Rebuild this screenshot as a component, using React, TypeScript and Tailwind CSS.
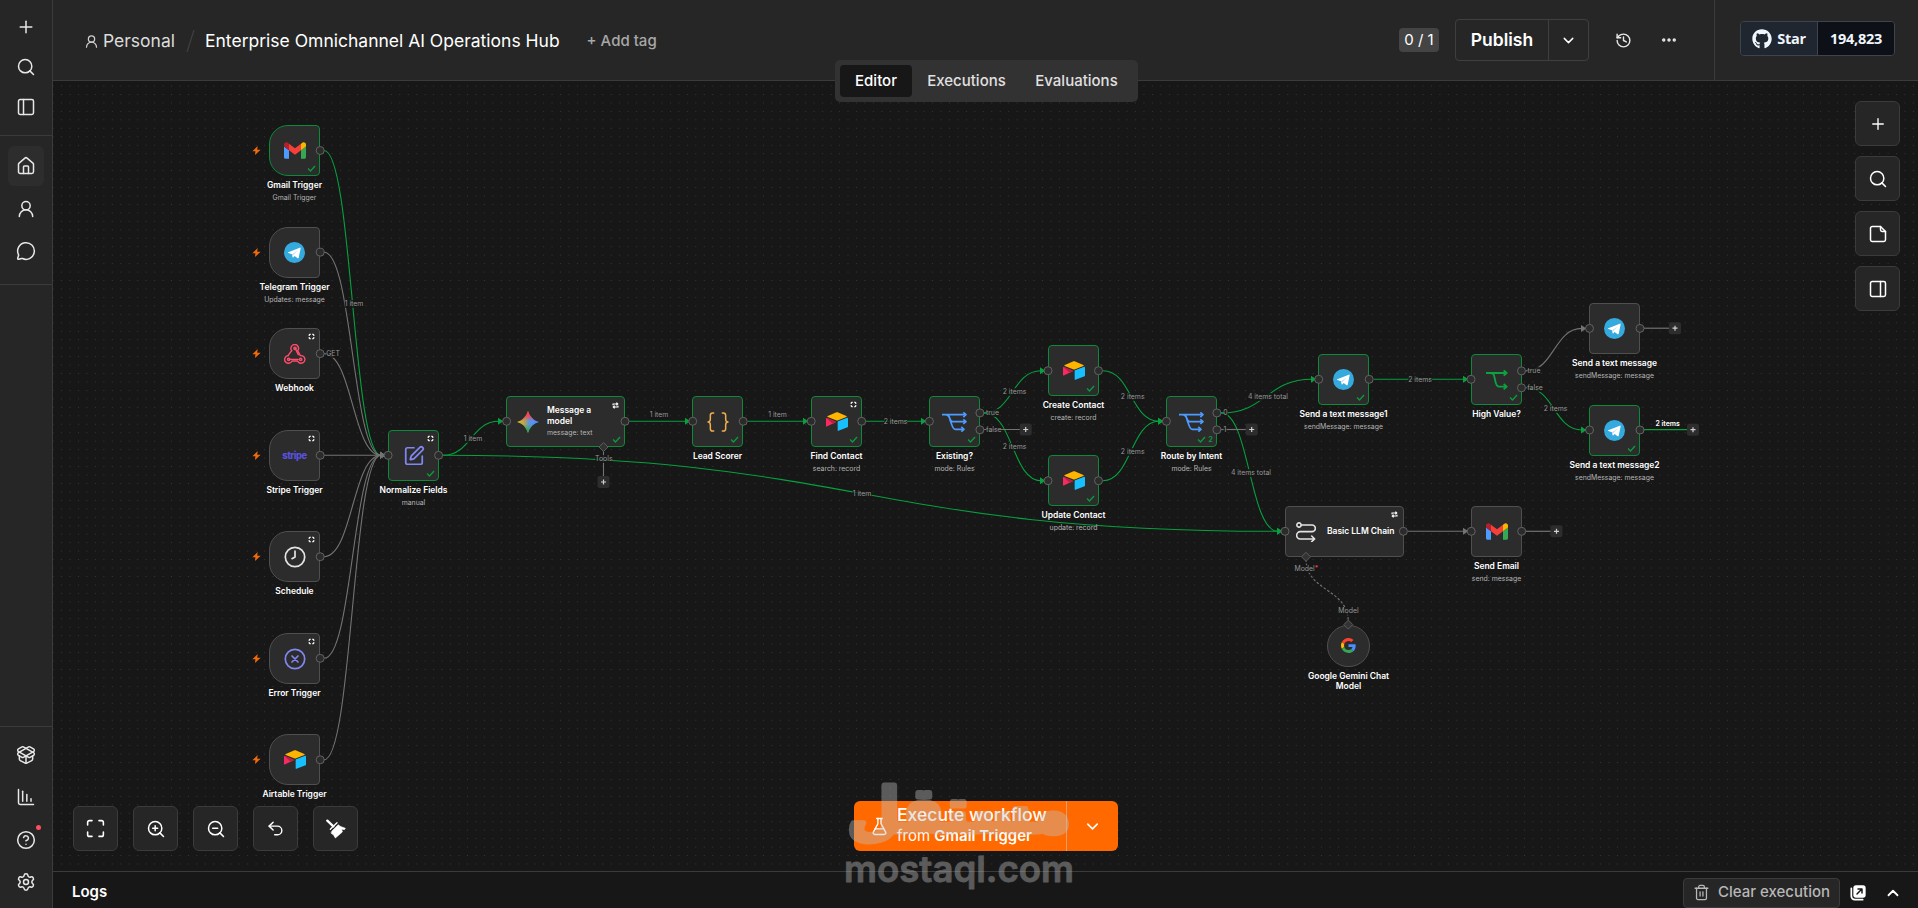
import React from 'react';
import {
  ChartColumnDecreasing,
  ChevronDown,
  ChevronUp,
  CircleHelp,
  Ellipsis,
  FlaskConical,
  History,
  House,
  Maximize,
  MessageCircle,
  PackageOpen,
  PanelLeft,
  PanelRight,
  Plus,
  Search,
  Settings,
  SquarePen,
  Trash2,
  Undo2,
  UserRound,
  ZoomIn,
  ZoomOut,
} from 'lucide-react';
import { FaGithub } from 'react-icons/fa';

/* ---------- brand / node icons ---------- */

const GmailIcon = () => (
  <svg width="22" height="17" viewBox="52 42 88 66">
    <path fill="#4c9bff" d="M58 108h14V74L52 59v43c0 3.32 2.69 6 6 6" />
    <path fill="#34a853" d="M120 108h14c3.32 0 6-2.69 6-6V59l-20 15" />
    <path fill="#fbb304" d="M120 48v26l20-15v-8c0-7.42-8.47-11.65-14.4-7.2" />
    <path fill="#f5403a" d="M72 74V48l24 18 24-18v26L96 92" />
    <path fill="#b3202a" d="M52 51v8l20 15V48l-5.600-4.200c-5.940-4.450-14.400-.22-14.400 7.200" />
  </svg>
);

const TelegramIcon = () => (
  <svg width="21" height="21" viewBox="0 0 24 24">
    <circle cx="12" cy="12" r="12" fill="#34aadf" />
    <path fill="#fff" d="M4.900 11.700 18 6.500c.8-.3 1.200.1 1 1l-2.200 10.400c-.2.8-.7 1-1.300.6l-3.300-2.500-1.700 1.600c-.3.3-.5.3-.6-.2l-.9-3.500-3.900-1.200c-.8-.3-.8-.7-.2-1z" />
    <path fill="#c8daea" d="m9.300 14 .6 3.500.5-2.500 5.500-5.500z" />
  </svg>
);

const AirtableIcon = () => (
  <svg width="22" height="19" viewBox="0 0 200 170">
    <path fill="#ffb400" d="M90 3 16 34c-5 2-5 8 0 10l75 29c6 3 13 3 20 0l74-29c5-2 5-8 0-10L111 3c-7-3-14-3-21 0" />
    <path fill="#18bfff" d="M106 89v76c0 4 3 6 7 5l83-33c2-1 4-3 4-5V56c0-4-4-6-7-5l-83 32c-2 1-4 3-4 6" />
    <path fill="#f82b60" d="m86 93-25 12-2 1-52 25c-3 2-7-1-7-4V58l2-4c2-2 4-2 7-1l76 31c4 1 4 7 1 9" />
    <path fill="#ba1e45" d="m86 93-25 12L2 54c2-2 4-2 7-1l76 31c4 1 4 7 1 9" />
  </svg>
);

const WebhookIcon = () => (
  <svg width="22" height="20" viewBox="0 0 66 60" fill="none" strokeLinecap="round" strokeLinejoin="round">
    <g stroke="#ff4d6d" strokeWidth="4.200">
      <path d="M23 20a11.500 11.500 0 1 1 20-3l-2 3 8 15a11.500 11.500 0 1 1-2 22 11.500 11.500 0 0 1-6-6H24a11.500 11.500 0 1 1-12-16" />
      <path d="M12 35 23 20M33 12l10 20M16 46h27" />
      <circle cx="33" cy="13" r="3.500" />
      <circle cx="14" cy="46" r="3.500" />
      <circle cx="50" cy="46" r="3.500" />
    </g>
  </svg>
);

const StripeIcon = () => (
  <span className="font-['Inter',sans-serif] text-[9.500px] leading-none font-extrabold tracking-[-0.500px] text-[#5851db]">stripe</span>
);

const ClockIcon = () => (
  <svg width="22" height="22" viewBox="0 0 22 22" fill="none" stroke="#e3e3e3" strokeWidth="1.700" strokeLinecap="round">
    <circle cx="11" cy="11" r="9.700" />
    <path d="M11 5.200V11l-3 1.700" />
  </svg>
);

const ErrorIcon = () => (
  <svg width="22" height="22" viewBox="0 0 22 22" fill="none" stroke="#8087f0" strokeWidth="1.700" strokeLinecap="round">
    <circle cx="11" cy="11" r="9.700" />
    <path d="m8 8 6 6M14 8l-6 6" />
  </svg>
);

const BracesIcon = () => (
  <svg width="22" height="20" viewBox="0 0 66 60" fill="none" stroke="#f0ad4e" strokeWidth="4.500" strokeLinecap="round" strokeLinejoin="round">
    <path d="M20 3h-3c-5 0-7 3-7 7v11c0 5-3 9-7 9 4 0 7 4 7 9v11c0 4 2 7 7 7h3M46 3h3c5 0 7 3 7 7v11c0 5 3 9 7 9-4 0-7 4-7 9v11c0 4-2 7-7 7h-3" />
  </svg>
);

const SwitchIcon = () => (
  <svg width="25.300" height="20" viewBox="0 0 76 60" fill="none" stroke="#4c9bff" strokeWidth="5" strokeLinejoin="round">
    <path d="M0 8h72M8 8c16 0 14 12 18 21s6 23 14 23h24M18 8c6 4 5 21 14 21h40" />
    <path d="m64 1 8 7-8 7M64 22l8 7-8 7M58 45l8 7-8 7" />
  </svg>
);

const BranchIcon = () => (
  <svg width="22" height="20" viewBox="0 0 66 60" fill="none" stroke="#0ba33f" strokeWidth="5.500" strokeLinejoin="round">
    <path d="M0 9h62M12 9c13 0 12 8 15 20 2 12 4 21 12 21h22" />
    <path d="m53 1 9 8-9 8M53 42l9 8-9 8" />
  </svg>
);

const GeminiIcon = () => (
  <svg width="22" height="22" viewBox="0 0 24 24">
    <defs>
      <linearGradient id="gem-h" x1="0" x2="1" y1="0.500" y2="0.500">
        <stop offset="0" stopColor="#fbbc04" />
        <stop offset="0.380" stopColor="#a7a06a" />
        <stop offset="0.550" stopColor="#5b94e8" />
        <stop offset="1" stopColor="#4c8dff" />
      </linearGradient>
      <linearGradient id="gem-t" x1="0.500" x2="0.500" y1="0" y2="1">
        <stop offset="0" stopColor="#f94543" />
        <stop offset="0.200" stopColor="#f94543" />
        <stop offset="0.450" stopColor="#f94543" stopOpacity="0" />
        <stop offset="0.600" stopColor="#34a853" stopOpacity="0" />
        <stop offset="0.850" stopColor="#34a853" />
      </linearGradient>
    </defs>
    <path fill="url(#gem-h)" d="M12 0c1.500 5.500 6 10.500 12 12-6 1.500-10.500 6.500-12 12-1.500-5.500-6-10.500-12-12C6 10.500 10.500 5.500 12 0" />
    <path fill="url(#gem-t)" d="M12 0c1.500 5.500 6 10.500 12 12-6 1.500-10.500 6.500-12 12-1.500-5.500-6-10.500-12-12C6 10.500 10.500 5.500 12 0" />
  </svg>
);

const ChainIcon = () => (
  <svg width="20" height="20" viewBox="0 0 60 60" fill="none" stroke="#e3e3e3" strokeWidth="4.800" strokeLinecap="round" strokeLinejoin="round">
    <circle cx="9" cy="9" r="6.500" />
    <path d="M16 9h32a10 10 0 0 1 0 20H13a11 11 0 0 0 0 22h43M47 42l9 9-9 8" />
  </svg>
);

const GoogleIcon = () => (
  <svg width="15" height="15" viewBox="0 0 48 48">
    <path fill="#ff4131" d="M24 9.500c3.540 0 6.710 1.220 9.210 3.600l6.850-6.850C35.900 2.380 30.470 0 24 0 14.620 0 6.510 5.380 2.560 13.220l7.980 6.190C12.430 13.720 17.740 9.500 24 9.500" />
    <path fill="#4c8dff" d="M46.980 24.550c0-1.570-.15-3.090-.38-4.550H24v9.020h12.940c-.58 2.960-2.260 5.480-4.780 7.180l7.730 6c4.510-4.180 7.090-10.360 7.090-17.650" />
    <path fill="#fbbc05" d="M10.530 28.590c-.48-1.450-.76-2.990-.76-4.590s.27-3.140.76-4.590l-7.980-6.190C.92 16.460 0 20.120 0 24s.92 7.540 2.560 10.780z" />
    <path fill="#34a853" d="M24 48c6.480 0 11.930-2.130 15.890-5.810l-7.730-6c-2.150 1.450-4.920 2.300-8.160 2.300-6.260 0-11.570-4.220-13.470-9.910l-7.980 6.190C6.510 42.620 14.620 48 24 48" />
  </svg>
);

const BroomIcon = () => (
  <svg width="20" height="20" viewBox="0 0 60 60" fill="#fff" stroke="#fff" strokeLinecap="round" strokeLinejoin="round">
    <path d="m4 5 18 17" strokeWidth="7" />
    <path d="M13 31 33 11" strokeWidth="4" />
    <path d="m18 36 19-19c4 6 12 7 21 11l-3 4-8-2 2 9-21 18-5-9-7-5z" strokeWidth="2" />
  </svg>
);

const NoteIcon = () => (
  <svg width="20" height="20" viewBox="0 0 24 24" fill="none" stroke="currentColor" strokeWidth="1.800" strokeLinecap="round" strokeLinejoin="round">
    <path d="M15 3H5a2 2 0 0 0-2 2v14a2 2 0 0 0 2 2h14a2 2 0 0 0 2-2V9z" />
    <path d="M15 3v4a2 2 0 0 0 2 2h4" />
  </svg>
);

const PopOutIcon = () => (
  <svg width="16" height="16" viewBox="0 0 24 24" fill="none">
    <rect x="5" y="0.500" width="18.500" height="18.500" rx="4" fill="#fff" />
    <path d="M2 5v12a5 5 0 0 0 5 5h12" stroke="#fff" strokeWidth="2.600" strokeLinecap="round" />
    <path d="m10.500 13.500 7-7M12 6h6v6" stroke="#171717" strokeWidth="2.200" strokeLinecap="round" strokeLinejoin="round" />
  </svg>
);

/* ---------- workflow data (canvas coordinates) ---------- */

type Mark = 'pin' | 'loop';

interface FlowNode {
  name: string;
  sub?: string;
  x: number;
  y: number;
  icon: React.ReactNode;
  ok?: boolean;
  runs?: string;
  trigger?: boolean;
  mark?: Mark;
  outs?: number[];
}

const nodes: FlowNode[] = [
  { name: 'Gmail Trigger', sub: 'Gmail Trigger', x: 295, y: 150.5, icon: <GmailIcon />, ok: true, trigger: true },
  { name: 'Telegram Trigger', sub: 'Updates: message', x: 295, y: 252.2, icon: <TelegramIcon />, trigger: true },
  { name: 'Webhook', x: 295, y: 353.6, icon: <WebhookIcon />, trigger: true, mark: 'pin' },
  { name: 'Stripe Trigger', x: 295, y: 455.3, icon: <StripeIcon />, trigger: true, mark: 'pin' },
  { name: 'Schedule', x: 295, y: 556.7, icon: <ClockIcon />, trigger: true, mark: 'pin' },
  { name: 'Error Trigger', x: 295, y: 658.3, icon: <ErrorIcon />, trigger: true, mark: 'pin' },
  { name: 'Airtable Trigger', x: 295, y: 759.8, icon: <AirtableIcon />, trigger: true },
  { name: 'Normalize Fields', sub: 'manual', x: 413.4, y: 455.3, icon: <SquarePen size={22} strokeWidth={1.9} color="#8087f0" />, ok: true, mark: 'pin', outs: [0] },
  { name: 'Lead Scorer', x: 718, y: 421.3, icon: <BracesIcon />, ok: true, outs: [0] },
  { name: 'Find Contact', sub: 'search: record', x: 836.5, y: 421.3, icon: <AirtableIcon />, ok: true, mark: 'pin', outs: [0] },
  { name: 'Existing?', sub: 'mode: Rules', x: 954.7, y: 421.3, icon: <SwitchIcon />, ok: true, outs: [-8.4, 8.5] },
  { name: 'Create Contact', sub: 'create: record', x: 1073.3, y: 370.7, icon: <AirtableIcon />, ok: true, outs: [0] },
  { name: 'Update Contact', sub: 'update: record', x: 1073.3, y: 480.7, icon: <AirtableIcon />, ok: true, outs: [0] },
  { name: 'Route by Intent', sub: 'mode: Rules', x: 1191.7, y: 421.3, icon: <SwitchIcon />, ok: true, runs: '2', outs: [-8.4, 8.5] },
  { name: 'Send a text message1', sub: 'sendMessage: message', x: 1344, y: 379.3, icon: <TelegramIcon />, ok: true, outs: [0] },
  { name: 'High Value?', x: 1496.3, y: 379.3, icon: <BranchIcon />, ok: true, outs: [-8.4, 8.5] },
  { name: 'Send a text message', sub: 'sendMessage: message', x: 1614.8, y: 328.4, icon: <TelegramIcon />, outs: [0] },
  { name: 'Send a text message2', sub: 'sendMessage: message', x: 1614.8, y: 430, icon: <TelegramIcon />, ok: true, outs: [0] },
  { name: 'Send Email', sub: 'send: message', x: 1496.5, y: 531.3, icon: <GmailIcon />, outs: [0] },
];

const GREEN = '#06a03e';
const GRAY = '#737373';

// [x1, y1, x2, y2, color]
const edges: [number, number, number, number, string][] = [
  [324, 150.5, 381, 455.3, GREEN],
  [324, 252.2, 381, 455.3, GRAY],
  [324, 353.6, 381, 455.3, GRAY],
  [324, 455.3, 381, 455.3, GRAY],
  [324, 556.7, 381, 455.3, GRAY],
  [324, 658.3, 381, 455.3, GRAY],
  [324, 759.8, 381, 455.3, GRAY],
  [443, 455.3, 499, 421.3, GREEN],
  [443, 455.3, 1278, 531.3, GREEN],
  [629, 421.3, 686, 421.3, GREEN],
  [748, 421.3, 804, 421.3, GREEN],
  [866, 421.3, 922, 421.3, GREEN],
  [984, 412.9, 1041, 370.7, GREEN],
  [984, 412.9, 1041, 480.7, GREEN],
  [1103, 370.7, 1159, 421.3, GREEN],
  [1103, 480.7, 1159, 421.3, GREEN],
  [1221, 412.9, 1312, 379.3, GREEN],
  [1221, 412.9, 1278, 531.3, GREEN],
  [1374, 379.3, 1464, 379.3, GREEN],
  [1526, 370.9, 1582, 328.4, GRAY],
  [1526, 387.8, 1582, 430, GREEN],
  [1408, 531.3, 1464, 531.3, GRAY],
];

// [text, centre x, centre y]
const labels: [string, number, number][] = [
  ['1 item', 354, 303.8],
  ['GET', 333, 353.8],
  ['1 item', 473, 438.8],
  ['1 item', 659, 414.8],
  ['1 item', 777.5, 414.8],
  ['2 items', 895.5, 421.8],
  ['2 items', 1014.5, 391.8],
  ['2 items', 1014.5, 446.8],
  ['2 items', 1132.7, 396.8],
  ['2 items', 1132.7, 451.8],
  ['4 items total', 1268, 396.8],
  ['4 items total', 1251, 472.8],
  ['2 items', 1420, 379.8],
  ['2 items', 1555.5, 408.8],
  ['1 item', 862, 493.8],
  ['true', 992.5, 412.9],
  ['false', 993.8, 429.8],
  ['0', 1225.5, 412.9],
  ['1', 1225, 429.8],
  ['true', 1534, 370.9],
  ['false', 1535, 387.8],
  ['Tools', 603.8, 458.8],
  ['Model', 1348.5, 610.8],
];

// open ended outputs: [x1, x2, y, color]
const stubs: [number, number, number, string][] = [
  [984, 1025.7, 429.5, GRAY],
  [1221, 1251.7, 429.5, GRAY],
  [1644, 1675, 328.2, GRAY],
  [1644, 1693, 429.7, GREEN],
  [1526, 1556.5, 531.3, GRAY],
];

const MarkIcon = ({ mark }: { mark: Mark }) =>
  mark === 'pin' ? (
    <svg width="7" height="7" viewBox="0 0 7 7" fill="none" stroke="#fff" strokeWidth="1.100">
      <path d="M1.200 2.900V2q0-.8.8-.8h.9M4.100 1.200H5q.8 0 .8.8v.9M5.800 4.100V5q0 .8-.8.8h-.9M2.900 5.800H2q-.8 0-.8-.8v-.9" />
    </svg>
  ) : (
    <svg width="7" height="7" viewBox="0 0 7 7" fill="none" stroke="#fff" strokeWidth="1.100">
      <path d="M1 3.200V2h4.600M4.400.6 5.800 2 4.400 3.400M6 3.800V5H1.400M2.600 3.600 1.200 5l1.400 1.400" />
    </svg>
  );

const Check = () => (
  <svg width="9" height="7" viewBox="0 0 9 7" fill="none" stroke="#0a9c3d" strokeWidth="1.300">
    <path d="M1 3.500 3.500 6 8 1" />
  </svg>
);

const Port = ({ x, y }: { x: number; y: number }) => (
  <circle cx={x} cy={y} r="4" fill="#2b2b2b" stroke="#636363" strokeWidth="1" />
);

function NodeCard({ node }: { node: FlowNode }) {
  return (
    <div
      className="absolute flex h-[51px] w-[51px] items-center justify-center"
      style={{ left: Math.round(node.x - 25.8), top: Math.round(node.y - 25.5) }}
    >
      <div
        className={`flex h-full w-full items-center justify-center border bg-[#2c2c2c] ${
          node.ok ? 'border-[#0b8a38]' : 'border-[#4f4f4f]'
        } ${node.trigger ? 'rounded-l-[19px] rounded-r-[4px]' : 'rounded-[4px]'}`}
      >
        {node.icon}
      </div>
      {node.mark && (
        <div className="absolute top-[5px] right-[5px]">
          <MarkIcon mark={node.mark} />
        </div>
      )}
      {node.ok && (
        <div className="absolute right-[4px] bottom-[4px] flex items-center gap-[2px] text-[7.500px] leading-[7px] font-semibold text-[#0a9c3d]">
          <Check />
          {node.runs}
        </div>
      )}
      {node.trigger && (
        <svg className="absolute top-[21px] -left-[17px]" width="9" height="9" viewBox="0 0 24 24" fill="#f06a0a">
          <path d="M15 0 1 14h8L8 24l15-14h-9z" />
        </svg>
      )}
      <div className="absolute top-[55px] flex w-[140px] flex-col items-center whitespace-nowrap">
        <span className="text-[8.460px] leading-[11.500px] font-semibold text-white">{node.name}</span>
        <span className="text-[6.900px] leading-[11.500px] text-[#b5b5b5]">{node.sub}</span>
      </div>
    </div>
  );
}

function Edges() {
  return (
    <svg className="absolute inset-0" width="1918" height="908" fill="none">
      <defs>
        <pattern id="dots" x="226.500" y="81.800" width="8.456" height="8.456" patternUnits="userSpaceOnUse">
          <circle cx="4.200" cy="4.200" r="0.550" fill="#3c3c3c" />
        </pattern>
      </defs>
      <rect width="1918" height="908" fill="url(#dots)" />
      {edges.map(([x1, y1, x2, y2, c], i) => {
        const m = (x1 + x2) / 2;
        return (
          <g key={i}>
            <path d={`M${x1} ${y1}C${m} ${y1} ${m} ${y2} ${x2} ${y2}`} stroke={c} strokeWidth="1.100" />
            <path d={`M${x2 - 1} ${y2 - 3.5}l5.500 3.500-5.500 3.500z`} fill={c} />
          </g>
        );
      })}
      {stubs.map(([x1, x2, y, c], i) => (
        <path key={i} d={`M${x1} ${y}H${x2}`} stroke={c} strokeWidth="1.200" />
      ))}
      <path d="M603.500 449V478" stroke={GRAY} strokeWidth="1.100" />
      <path d="M1306 559C1306 592 1348.300 588 1348.300 622" stroke={GRAY} strokeWidth="1.100" strokeDasharray="2.600 1.800" />
    </svg>
  );
}

function Ports() {
  return (
    <svg className="absolute inset-0" width="1918" height="908" fill="none">
      {nodes.map((n) => (
        <g key={n.name}>
          {(n.outs ?? [0]).map((o) => (
            <Port key={o} x={n.x + 25.2} y={n.y + o} />
          ))}
          {!n.trigger && <Port x={n.x - 25.3} y={n.y} />}
        </g>
      ))}
      <Port x={506.6} y={421.3} />
      <Port x={625} y={421.3} />
      <Port x={1285} y={531.3} />
      <Port x={1403.4} y={531.3} />
      {[
        [603.5, 447],
        [1306, 556.8],
        [1348.3, 624.6],
      ].map(([x, y]) => (
        <path key={x} d={`M${x} ${y - 4.5}l4.500 4.500-4.500 4.500-4.500-4.500z`} fill="#333" stroke="#5c5c5c" />
      ))}
      {[...stubs.map(([, x, y]) => [x, y]), [603.5, 482]].map(([x, y]) => (
        <g key={`${x}-${y}`}>
          <rect x={x - 6} y={y - 6} width="12" height="12" rx="2" fill="#2d2d2d" />
          <path d={`M${x - 2.5} ${y}h5M${x} ${y - 2.5}v5`} stroke="#d0d0d0" strokeWidth="1.200" />
        </g>
      ))}
    </svg>
  );
}

function WideNodes() {
  return (
    <>
      <div className="absolute top-[396px] left-[506px] flex h-[51px] w-[119px] items-center rounded-[4px] border border-[#0b8a38] bg-[#2c2c2c] pl-[10px]">
        <GeminiIcon />
        <div className="ml-[8px] flex flex-col text-[8.460px] leading-[11px] font-semibold text-white">
          <span className="w-[50px]">Message a model</span>
          <span className="text-[6.900px] font-normal text-[#b5b5b5]">message: text</span>
        </div>
        <div className="absolute top-[5px] right-[5px]">
          <MarkIcon mark="loop" />
        </div>
        <div className="absolute right-[3px] bottom-[3px]">
          <Check />
        </div>
      </div>
      <div className="absolute top-[506px] left-[1285px] flex h-[51px] w-[119px] items-center rounded-[4px] border border-[#4f4f4f] bg-[#2c2c2c] pl-[10px]">
        <ChainIcon />
        <span className="ml-[11px] text-[8.460px] font-semibold whitespace-nowrap text-white">Basic LLM Chain</span>
        <div className="absolute top-[4px] right-[5px]">
          <MarkIcon mark="loop" />
        </div>
      </div>
      <div className="absolute top-[624.500px] left-[1327px] flex h-[42.500px] w-[42.500px] items-center justify-center rounded-full border border-[#4f4f4f] bg-[#2c2c2c]">
        <GoogleIcon />
      </div>
      <div className="absolute top-[671px] left-[1298.500px] w-[100px] text-center text-[8.460px] leading-[10px] font-semibold text-white">
        Google Gemini Chat
        <br />
        Model
      </div>
    </>
  );
}

function Workflow() {
  return (
    <div className="absolute -top-[81px] -left-[53px] h-[908px] w-[1918px]">
      <Edges />
      {labels.map(([text, x, y], i) => (
        <span
          key={i}
          className="absolute -translate-x-1/2 -translate-y-1/2 bg-[#171717]/80 text-[6.900px] leading-[8px] whitespace-nowrap text-[#969696]"
          style={{ left: x, top: y }}
        >
          {text}
        </span>
      ))}
      <span className="absolute top-[564.500px] left-[1294.500px] bg-[#171717]/80 text-[6.900px] leading-[8px] text-[#969696]">
        Model<span className="text-[#ff4d5e]">*</span>
      </span>
      <span className="absolute top-[419.500px] left-[1655.500px] text-[6.900px] leading-[8px] font-semibold whitespace-nowrap text-white">2 items</span>
      {nodes.map((n) => (
        <NodeCard key={n.name} node={n} />
      ))}
      <WideNodes />
      <Ports />
    </div>
  );
}

/* ---------- chrome ---------- */

const SideItem = ({ children, active }: { children: React.ReactNode; active?: boolean }) => (
  <button className={`relative flex h-10 w-9 items-center justify-center rounded-md ${active ? 'bg-[#2d2d2d]' : ''}`}>
    {children}
  </button>
);

function Sidebar() {
  return (
    <aside className="flex h-full w-[53px] shrink-0 flex-col border-r border-[#3b3b3b] bg-[#262626] text-[#e8e8e8]">
      <div className="flex flex-col items-center border-b border-[#3b3b3b] pt-[7px] pb-2">
        <SideItem><Plus size={20} strokeWidth={1.8} /></SideItem>
        <SideItem><Search size={20} strokeWidth={1.8} /></SideItem>
        <SideItem><PanelLeft size={20} strokeWidth={1.8} /></SideItem>
      </div>
      <div className="flex flex-col items-center gap-[2.500px] border-b border-[#3b3b3b] pt-[10px] pb-[13px]">
        <SideItem active><House size={20} strokeWidth={1.8} /></SideItem>
        <SideItem><UserRound size={20} strokeWidth={1.8} /></SideItem>
        <SideItem><MessageCircle size={20} strokeWidth={1.8} /></SideItem>
      </div>
      <div className="flex-1" />
      <div className="flex flex-col items-center gap-[2.500px] border-t border-[#3b3b3b] pt-2 pb-[6px]">
        <SideItem><PackageOpen size={20} strokeWidth={1.8} /></SideItem>
        <SideItem><ChartColumnDecreasing size={20} strokeWidth={1.8} /></SideItem>
        <SideItem>
          <CircleHelp size={20} strokeWidth={1.8} />
          <span className="absolute top-[5px] right-[3px] h-[5px] w-[5px] rounded-full bg-[#ff4d5e]" />
        </SideItem>
        <SideItem><Settings size={20} strokeWidth={1.8} /></SideItem>
      </div>
    </aside>
  );
}

function Header() {
  return (
    <header className="flex h-[81px] shrink-0 items-stretch border-b border-[#3b3b3b] bg-[#262626]">
      <div className="flex flex-1 items-center pt-[2px] pl-[31px] whitespace-nowrap">
        <UserRound size={15} strokeWidth={2} className="text-[#d0d0d0]" />
        <span className="ml-[4px] text-[17.500px] font-normal text-[#dcdcdc]">Personal</span>
        <svg className="ml-[11px]" width="9" height="22" viewBox="0 0 9 22" stroke="#3f3f3f" strokeWidth="1.300">
          <path d="M8 0 1 22" />
        </svg>
        <span className="ml-[10px] text-[17.500px] text-white">Enterprise Omnichannel AI Operations Hub</span>
        <span className="ml-[27px] text-[15px] font-medium text-[#a8a8a8]">+ Add tag</span>
      </div>
      <div className="flex w-[315px] items-center">
        <span className="flex h-[24px] w-[40px] items-center justify-center rounded bg-[#444] text-[15px] whitespace-nowrap text-white">0 / 1</span>
        <div className="ml-[16px] flex h-[42px] w-[134px] rounded border border-[#3f3f3f] text-white">
          <span className="flex flex-1 items-center justify-center text-[17.500px] font-semibold">Publish</span>
          <span className="flex w-[40px] items-center justify-center border-l border-[#3f3f3f]">
            <ChevronDown size={17} strokeWidth={2} />
          </span>
        </div>
        <History size={17} strokeWidth={2} className="ml-[26px] text-[#e8e8e8]" />
        <Ellipsis size={18} strokeWidth={2.6} className="ml-[28px] text-[#e8e8e8]" />
      </div>
      <div className="flex w-[204px] items-center border-l border-[#3b3b3b] pb-[3px] pl-[25px]">
        <div className="flex h-[35px] w-[155px] overflow-hidden rounded border border-[#3d444d] font-['Open_Sans',sans-serif] text-[14.500px] font-bold tracking-[-0.300px] text-[#f0f6fc]">
          <span className="flex w-[77px] items-center justify-center gap-[5px] border-r border-[#3d444d] bg-[#1f2630]">
            <FaGithub size={20} />
            Star
          </span>
          <span className="flex flex-1 items-center justify-center bg-[#0d1117]">194,823</span>
        </div>
      </div>
    </header>
  );
}

const CanvasButton = ({ children }: { children: React.ReactNode }) => (
  <button className="flex h-[45px] w-[45px] items-center justify-center rounded-[6px] border border-[#3b3b3b] bg-[#262626] text-white">
    {children}
  </button>
);

function ExecuteButton() {
  return (
    <div className="absolute top-[720px] left-[801px] flex h-[50px] w-[264px] rounded-[6px] bg-[#ff6900] text-white">
      <div className="flex w-[213px] items-center border-r border-[#e0a070] pl-[16px]">
        <FlaskConical size={19} strokeWidth={1.8} />
        <div className="ml-[8px] flex flex-col pb-[2px] whitespace-nowrap">
          <span className="text-[17.600px] leading-[21px] font-medium">Execute workflow</span>
          <span className="text-[15px] leading-[21px]">
            from <span className="font-semibold">Gmail Trigger</span>
          </span>
        </div>
      </div>
      <div className="flex flex-1 items-center justify-center">
        <ChevronDown size={19} strokeWidth={2} />
      </div>
    </div>
  );
}

function Watermark() {
  return (
    <svg
      className="pointer-events-none absolute top-[740px] left-[835px] overflow-visible opacity-40"
      width="250"
      height="160"
      fill="#c1c1c1"
      stroke="#c1c1c1"
      strokeLinejoin="round"
    >
      <text x="12" y="92" direction="ltr" textLength="224" lengthAdjust="spacingAndGlyphs" fontFamily="DejaVu Sans, sans-serif" fontWeight="700" fontSize="62" strokeWidth="5">
        مستقل
      </text>
      <text x="9" y="141.500" textLength="230" lengthAdjust="spacingAndGlyphs" fontFamily="Inter, sans-serif" fontWeight="600" fontSize="36" strokeWidth="0.800">
        mostaql.com
      </text>
    </svg>
  );
}

export default function App() {
  return (
    <div className="relative flex h-[908px] w-[1918px] overflow-hidden bg-[#171717] font-['Inter',sans-serif]">
      <Sidebar />
      <div className="relative flex min-w-0 flex-1 flex-col">
        <Header />
        <nav className="absolute top-[60px] left-[782px] z-10 flex h-[42px] w-[303px] items-center rounded-[5px] bg-[#323232] p-[5px] text-[15px] font-medium text-[#e0e0e0]">
          <span className="flex h-[32px] w-[72px] items-center justify-center rounded bg-[#171717] text-white">Editor</span>
          <span className="flex w-[109px] justify-center">Executions</span>
          <span className="flex w-[111px] justify-center">Evaluations</span>
        </nav>
        <main className="relative flex-1 overflow-hidden">
          <Workflow />
          <div className="absolute top-[20px] right-[18px] flex flex-col gap-[10px]">
            <CanvasButton><Plus size={18} strokeWidth={1.8} /></CanvasButton>
            <CanvasButton><Search size={20} strokeWidth={1.8} /></CanvasButton>
            <CanvasButton><NoteIcon /></CanvasButton>
            <CanvasButton><PanelRight size={20} strokeWidth={1.8} /></CanvasButton>
          </div>
          <div className="absolute bottom-[20px] left-[20px] flex gap-[15px]">
            <CanvasButton><Maximize size={21} strokeWidth={1.8} /></CanvasButton>
            <CanvasButton><ZoomIn size={20} strokeWidth={1.8} /></CanvasButton>
            <CanvasButton><ZoomOut size={20} strokeWidth={1.8} /></CanvasButton>
            <CanvasButton><Undo2 size={19} strokeWidth={1.8} /></CanvasButton>
            <CanvasButton><BroomIcon /></CanvasButton>
          </div>
          <ExecuteButton />
        </main>
        <footer className="flex h-[37px] shrink-0 items-center border-t border-[#3b3b3b] bg-[#171717] pt-[5px] pl-[19px] text-white">
          <span className="text-[15px] font-semibold">Logs</span>
          <div className="ml-auto flex h-[30px] w-[157px] items-center justify-center gap-[8px] rounded-[4px] border border-[#3b3b3b] bg-[#262626] text-[15px] font-medium whitespace-nowrap text-[#b8b8b8]">
            <Trash2 size={17} strokeWidth={1.8} />
            Clear execution
          </div>
          <div className="ml-[10px] flex w-[68px] items-center gap-[18px]">
            <PopOutIcon />
            <ChevronUp size={18} strokeWidth={2.4} />
          </div>
        </footer>
      </div>
      <Watermark />
    </div>
  );
}
